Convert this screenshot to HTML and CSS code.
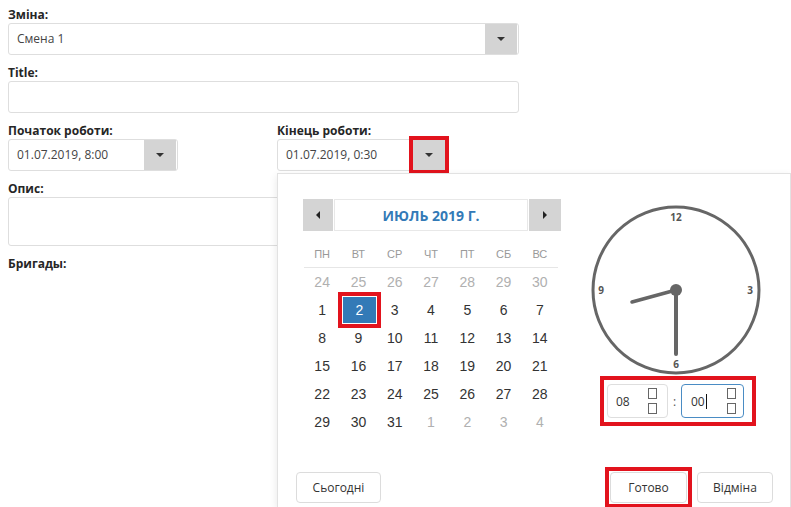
FILE: index.html
```html
<!DOCTYPE html>
<html lang="uk">
<head>
<meta charset="utf-8">
<title>Form</title>
<link rel="stylesheet" href="styles.css">
</head>
<body>
<div class="form">
  <div class="group">
    <label class="lbl">Зміна:</label>
    <div class="field wide"><span class="val">Смена 1</span><span class="btn"><i class="caret"></i></span></div>
  </div>
  <div class="group">
    <label class="lbl">Title:</label>
    <div class="field wide"></div>
  </div>
  <div class="group dates">
    <div class="col">
      <label class="lbl">Початок роботи:</label>
      <div class="field dt"><span class="val">01.07.2019, 8:00</span><span class="btn"><i class="caret"></i></span></div>
    </div>
    <div class="col anchor">
      <label class="lbl">Кінець роботи:</label>
      <div class="field dt"><span class="val">01.07.2019, 0:30</span><span class="btn hl"><i class="caret"></i></span></div>
      <div class="popup">
        <div class="pbody">
          <div class="cal">
            <div class="cal-head">
              <div class="nav prev"><i class="tri-l"></i></div>
              <div class="title">ИЮЛЬ 2019 Г.</div>
              <div class="nav next"><i class="tri-r"></i></div>
            </div>
            <div class="days">
              <div class="dn">ПН</div><div class="dn">ВТ</div><div class="dn">СР</div><div class="dn">ЧТ</div><div class="dn">ПТ</div><div class="dn">СБ</div><div class="dn">ВС</div>
              <div class="d o">24</div><div class="d o">25</div><div class="d o">26</div><div class="d o">27</div><div class="d o">28</div><div class="d o">29</div><div class="d o">30</div>
              <div class="d">1</div><div class="d sel"><span>2</span></div><div class="d">3</div><div class="d">4</div><div class="d">5</div><div class="d">6</div><div class="d">7</div>
              <div class="d">8</div><div class="d">9</div><div class="d">10</div><div class="d">11</div><div class="d">12</div><div class="d">13</div><div class="d">14</div>
              <div class="d">15</div><div class="d">16</div><div class="d">17</div><div class="d">18</div><div class="d">19</div><div class="d">20</div><div class="d">21</div>
              <div class="d">22</div><div class="d">23</div><div class="d">24</div><div class="d">25</div><div class="d">26</div><div class="d">27</div><div class="d">28</div>
              <div class="d">29</div><div class="d">30</div><div class="d">31</div><div class="d o">1</div><div class="d o">2</div><div class="d o">3</div><div class="d o">4</div>
            </div>
          </div>
          <div class="clockcol">
            <svg class="clock" width="172" height="172" viewBox="0 0 172 172">
              <circle cx="86" cy="86" r="83" fill="none" stroke="#666" stroke-width="3"/>
              <text x="86" y="17" class="num">12</text>
              <text x="160" y="90" class="num">3</text>
              <text x="86" y="164" class="num">6</text>
              <text x="11" y="90" class="num">9</text>
              <line x1="86" y1="86" x2="42" y2="98" stroke="#666" stroke-width="3.5" stroke-linecap="round"/>
              <line x1="86" y1="86" x2="86" y2="150" stroke="#666" stroke-width="4" stroke-linecap="round"/>
              <circle cx="86" cy="86" r="6" fill="#666"/>
            </svg>
            <div class="timebox">
              <div class="tin"><span class="tv">08</span><span class="spin"><i></i><i></i></span></div>
              <span class="colon">:</span>
              <div class="tin focus"><span class="tv">00<b class="caretline"></b></span><span class="spin"><i></i><i></i></span></div>
            </div>
          </div>
        </div>
        <div class="foot">
          <div class="b today">Сьогодні</div>
          <div class="right">
            <div class="b ok">Готово</div>
            <div class="b cancel">Відміна</div>
          </div>
        </div>
      </div>
    </div>
  </div>
  <div class="group">
    <label class="lbl">Опис:</label>
    <div class="field wide ta"></div>
  </div>
  <div class="group">
    <label class="lbl">Бригады:</label>
  </div>
</div>
</body>
</html>
```
FILE: styles.css
```css
* { box-sizing: border-box; }
html, body { margin: 0; overflow: hidden; }
body {
  width: 791px;
  height: 507px;
  background: #fff;
  font-family: "Open Sans", sans-serif;
  color: #333;
}
.form { position: relative; width: 511px; margin: 6px 0 0 8px; }
.group { margin-bottom: 9px; }
.lbl {
  display: block;
  font-size: 12px;
  font-weight: 700;
  line-height: 17px;
  color: #262626;
}
.field {
  height: 32px;
  border: 1px solid #dedede;
  border-radius: 3px;
  display: flex;
  align-items: flex-start;
  background: #fff;
  font-size: 12px;
  color: #444;
}
.field .val { flex: 1; padding-left: 8px; line-height: 30px; }
.wide { width: 511px; }
.ta { height: 49px; }
.btn {
  width: 32px;
  height: 30px;
  margin-right: 1px;
  background: #d4d4d4;
  display: flex;
  align-items: center;
  justify-content: center;
}
.btn.hl { outline: 4px solid #e2131d; outline-offset: 0; }
.caret {
  display: block;
  width: 0; height: 0;
  border-left: 4px solid transparent;
  border-right: 4px solid transparent;
  border-top: 4px solid #333;
}
.dates { display: grid; grid-template-columns: 269px 242px; }
.dt { width: 170px; }
.anchor { position: relative; }

.popup {
  position: absolute;
  left: 0;
  top: calc(100% + 2px);
  width: 514px;
  height: 334px;
  background: #fff;
  border: 1px solid #e2e2e2;
  border-bottom: 0;
  box-shadow: 0 3px 8px rgba(0,0,0,0.10);
  padding: 25px 17px 0 18px;
  z-index: 5;
}
.pbody { display: flex; align-items: flex-start; }
.cal { width: 258px; margin-left: 7px; font-family: "Liberation Sans", Arial, sans-serif; }
.cal-head { display: flex; height: 32px; gap: 1px; }
.nav {
  width: 30px;
  background: #d4d4d4;
  display: flex;
  align-items: center;
  justify-content: center;
}
.nav.next { width: 32px; }
.tri-l, .tri-r { display: block; width: 0; height: 0; border-top: 4px solid transparent; border-bottom: 4px solid transparent; }
.tri-l { border-right: 4px solid #222; }
.tri-r { border-left: 4px solid #222; }
.title {
  flex: 1;
  border: 1px solid #e8e8e8;
  display: flex;
  align-items: center;
  justify-content: center;
  font-family: "Open Sans", sans-serif;
  font-weight: 700;
  font-size: 14px;
  color: #337ab7;
}
.days {
  display: grid;
  grid-template-columns: repeat(7, 1fr);
  width: 254px;
  margin: 10px 0 0 1px;
}
.dn {
  height: 27px;
  line-height: 27px;
  text-align: center;
  font-size: 11px;
  color: #999;
  border-bottom: 1px solid #e6e6e6;
}
.d {
  height: 28px;
  display: flex;
  align-items: center;
  justify-content: center;
  font-family: "Liberation Sans", Arial, sans-serif;
  font-size: 14px;
  color: #333;
}
.d.o { color: #b0b0b0; }
.d.sel span {
  position: relative;
  width: 33px;
  height: 26px;
  margin-left: 2px;
  display: flex;
  align-items: center;
  justify-content: center;
  background: #337ab7;
  color: #fff;
}
.d.sel span::after {
  content: "";
  position: absolute;
  inset: -5px;
  border: 4px solid #e2131d;
}
.clockcol { margin-left: 29px; margin-top: 5px; width: 172px; }
.clock { display: block; }
.num { font-family: "Open Sans", sans-serif; font-size: 10px; font-weight: 700; fill: #555; text-anchor: middle; }
.timebox {
  display: inline-flex;
  align-items: center;
  margin-left: 10px;
  border: 4px solid #e2131d;
  padding: 4px 8px 4px 3px;
}
.tin {
  width: 61px;
  height: 34px;
  border: 1px solid #dedede;
  border-radius: 4px;
  display: flex;
  align-items: center;
  padding-left: 8px;
  font-size: 12px;
  color: #333;
}
.tin.focus { width: 63px; padding-left: 9px; border-color: #4a8cc4; }
.tv { display: flex; align-items: center; }
.caretline { display: block; width: 1px; height: 15px; background: #111; margin-left: 1px; }
.spin { margin-left: auto; margin-right: 10px; display: flex; flex-direction: column; gap: 4px; }
.tin.focus .spin { margin-right: 7px; }
.spin i { display: block; width: 9px; height: 11px; border: 1px solid #666; }
.colon { width: 13px; text-align: center; font-size: 12px; color: #555; }

.foot { display: flex; justify-content: space-between; margin-top: 36px; }
.right { display: flex; gap: 10px; }
.b {
  position: relative;
  height: 31px;
  border: 1px solid #dcdcdc;
  border-radius: 4px;
  background: #fff;
  display: flex;
  align-items: center;
  justify-content: center;
  font-size: 12px;
  color: #333;
}
.today { width: 85px; }
.ok { width: 77px; }
.ok::after {
  content: "";
  position: absolute;
  inset: -6px;
  border: 4px solid #e2131d;
}
.cancel { width: 76px; }
```
